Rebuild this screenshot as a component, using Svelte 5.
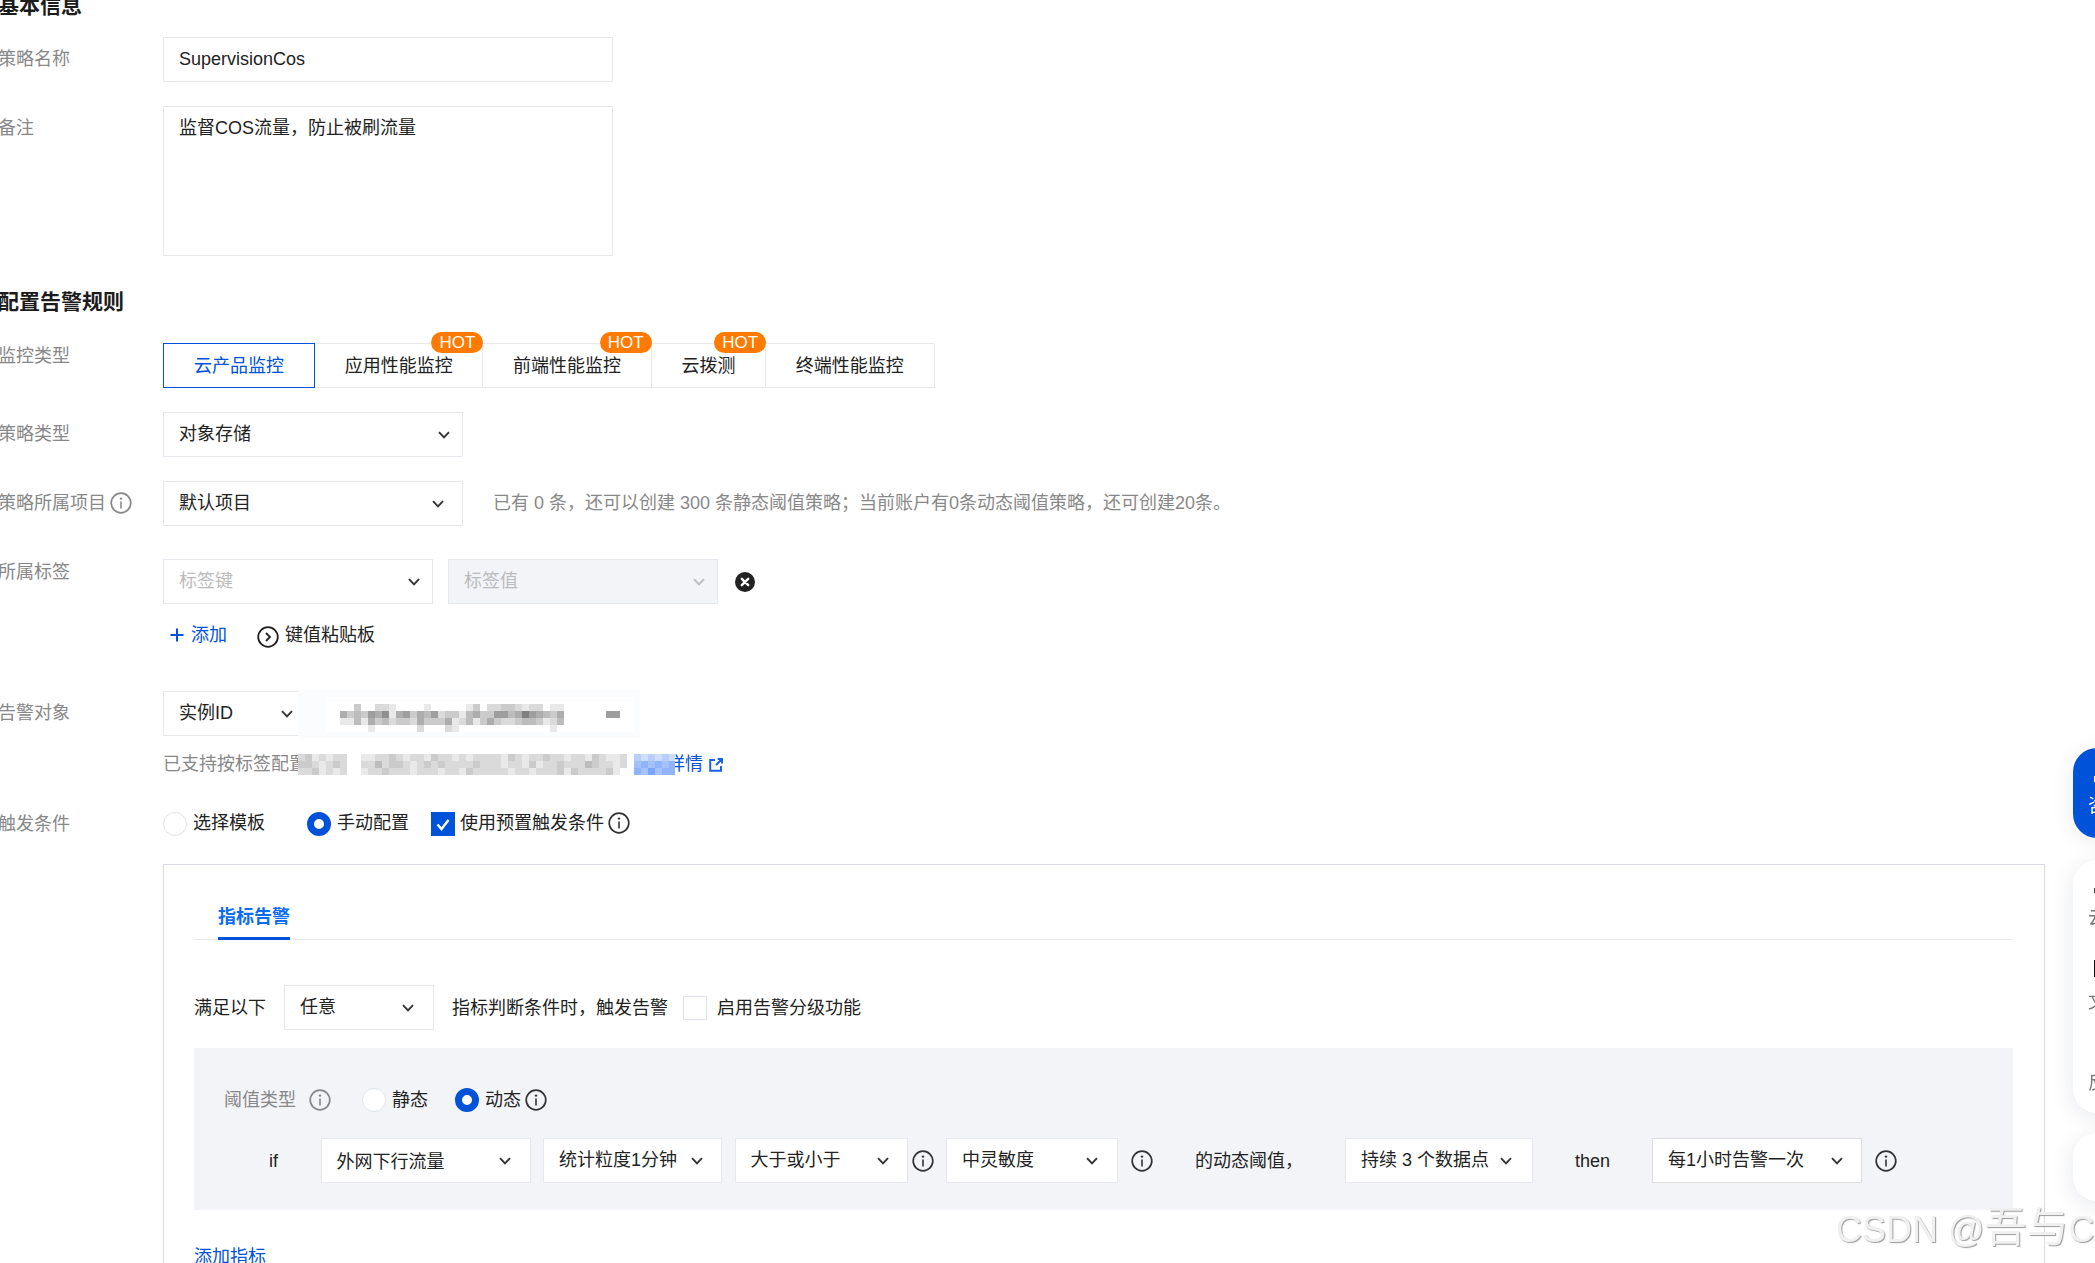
<script>
  const tabs = [
    { name: '云产品监控', active: true },
    { name: '应用性能监控', hot: true },
    { name: '前端性能监控', hot: true },
    { name: '云拨测', hot: true },
    { name: '终端性能监控' }
  ];

  // blurred-out values in the screenshot, one digit per 7px block (0 = nothing)
  const valueRows = [
    '00300221000010000013022332122011000000',
    '53436571563546233145336645865435000000660',
    '114153423325333512413532234431240000000',
    '000010000002000210000000000000100000000'
  ];
  const noteRows = [
    '23121220011223212213221212222132122322122132112',
    '33212320022423321232322223222122131223222432212',
    '22312120012232221222122132222212212223132222310'
  ];
  const linkRows = ['212121', '343434', '435344'];

  function cells(rows, color) {
    const out = [];
    rows.forEach((row, y) => {
      [...row].forEach((v, x) => {
        if (v !== '0') out.push({ x: x * 7, y: y * 7, fill: color(+v) });
      });
    });
    return out;
  }
  const gray = (v) => { const c = 248 - v * 15; return `rgb(${c},${c},${c})`; };
  const blue = (v) => `rgb(${225 - v * 20},${235 - v * 14},250)`;
</script>

{#snippet chevron()}
  <svg class="chevron" viewBox="0 0 12 8"><path d="M1 1.2 6 6.4l5-5.2" /></svg>
{/snippet}

{#snippet info(cls)}
  <svg class="info {cls}" viewBox="0 0 22 22">
    <circle class="ring" cx="11" cy="11" r="9.8" />
    <circle class="dot" cx="11" cy="6.6" r="1.2" />
    <path class="stem" d="M11 9.6v7" />
  </svg>
{/snippet}

<div class="page">
  <h2>基本信息</h2>
  <div class="row first">
    <div class="label">策略名称</div>
    <div class="input">SupervisionCos</div>
  </div>
  <div class="row">
    <div class="label">备注</div>
    <div class="input textarea">监督COS流量，防止被刷流量</div>
  </div>

  <h2 class="rules">配置告警规则</h2>
  <div class="row tabs-row">
    <div class="label up">监控类型</div>
    <div class="tabs">
      {#each tabs as tab}
        <div class="tab" class:active={tab.active}>
          {tab.name}
          {#if tab.hot}<span class="hot">HOT</span>{/if}
        </div>
      {/each}
    </div>
  </div>
  <div class="row">
    <div class="label">策略类型</div>
    <div class="select s-wide tight"><span>对象存储</span>{@render chevron()}</div>
  </div>
  <div class="row">
    <div class="label with-icon">策略所属项目{@render info('muted')}</div>
    <div class="select s-wide"><span>默认项目</span>{@render chevron()}</div>
    <div class="quota">已有 0 条，还可以创建 300 条静态阈值策略；当前账户有0条动态阈值策略，还可创建20条。</div>
  </div>
  <div class="row tag-row">
    <div class="label up">所属标签</div>
    <div class="select s-tag tight placeholder"><span>标签键</span>{@render chevron()}</div>
    <div class="select s-tag tight placeholder disabled"><span>标签值</span>{@render chevron()}</div>
    <svg class="clear" viewBox="0 0 20 20">
      <circle cx="10" cy="10" r="10" />
      <path d="M6.8 6.8l6.4 6.4M13.2 6.8l-6.4 6.4" />
    </svg>
  </div>
  <div class="actions">
    <span class="link add">
      <svg class="plus" viewBox="0 0 14 14"><path d="M7 0.5v13M0.5 7h13" /></svg>
      添加
    </span>
    <span class="paste">
      <svg class="paste-icon" viewBox="0 0 22 22">
        <circle cx="11" cy="11" r="9.8" />
        <path d="M9 7l4 4-4 4" />
      </svg>
      键值粘贴板
    </span>
  </div>
  <div class="row target-row">
    <div class="label">告警对象</div>
    <div class="select s-target"><span>实例ID</span>{@render chevron()}</div>
    <div class="blur-box">
      <div class="blur-inner">
        <svg class="blur-values" width="294" height="28">
          {#each cells(valueRows, gray) as c}
            <rect x={c.x} y={c.y} width="7" height="7" fill={c.fill} />
          {/each}
        </svg>
      </div>
    </div>
  </div>
  <div class="note">
    <span class="note-text">已支持按标签配置</span>
    <svg class="blur-note" width="377" height="21">
      {#each cells(noteRows, gray) as c}
        <rect x={c.x} y={c.y} width="7" height="7" fill={c.fill} />
      {/each}
      {#each cells(linkRows, blue) as c}
        <rect x={c.x + 336} y={c.y} width="7" height="7" fill={c.fill} />
      {/each}
    </svg>
    <span class="link note-link">详情</span>
    <svg class="external" viewBox="0 0 14 14">
      <path d="M6 2H1.2v10.8H12V8" />
      <path d="M7 7l6-6M8.6 1H13v4.4" />
    </svg>
  </div>
  <div class="row trigger-row">
    <div class="label">触发条件</div>
    <span class="radio"></span>
    <span class="opt">选择模板</span>
    <span class="radio checked gap-l"></span>
    <span class="opt">手动配置</span>
    <span class="check checked gap-m">
      <svg viewBox="0 0 24 24"><path d="M6.5 12.5l4 4.5 7-9" /></svg>
    </span>
    <span class="opt narrow">使用预置触发条件</span>
    {@render info('dark')}
  </div>

  <div class="box">
    <div class="box-tabs"><span class="box-tab">指标告警</span></div>

    <div class="match-row">
      <span>满足以下</span>
      <div class="select s-any"><span>任意</span>{@render chevron()}</div>
      <span>指标判断条件时，触发告警</span>
      <span class="check"></span>
      <span>启用告警分级功能</span>
    </div>

    <div class="panel">
      <div class="type-row">
        <span class="type-label">阈值类型</span>
        {@render info('muted')}
        <span class="radio filled static"></span>
        <span class="opt">静态</span>
        <span class="radio checked dynamic"></span>
        <span class="opt">动态</span>
        {@render info('dark')}
      </div>
      <div class="if-row">
        <span class="if">if</span>
        <div class="select s1 low"><span>外网下行流量</span>{@render chevron()}</div>
        <div class="select s2"><span>统计粒度1分钟</span>{@render chevron()}</div>
        <div class="select s3"><span>大于或小于</span>{@render chevron()}</div>
        <span class="pull">{@render info('dark')}</span>
        <div class="select s4"><span>中灵敏度</span>{@render chevron()}</div>
        {@render info('dark')}
        <span class="dyn">的动态阈值，</span>
        <div class="select s5"><span>持续 3 个数据点</span>{@render chevron()}</div>
        <span class="then">then</span>
        <div class="select s6"><span>每1小时告警一次</span>{@render chevron()}</div>
        {@render info('dark')}
      </div>
    </div>

    <div class="link add-metric">添加指标</div>
  </div>
</div>

<div class="side">
  <div class="side-consult"><i class="bar"></i><span>咨询</span></div>
  <div class="side-card">
    <i class="tick"></i>
    <span class="cloud">云</span>
    <i class="bar"></i>
    <span class="doc">文</span>
    <span class="feedback">反</span>
  </div>
  <div class="side-card small"></div>
</div>

<div class="watermark">CSDN @<span class="cjk">吾与</span>C</div>

<style>
  :global(html), :global(body) {
    margin: 0;
    height: 100%;
    overflow: hidden;
    background: #fff;
  }

  .page {
    margin: -9px 0 0 -2px;
    width: 2097px;
    font-family: "Liberation Sans", "Noto Sans CJK SC", sans-serif;
    font-size: 18px;
    line-height: 24px;
    color: #222;
  }

  h2 {
    margin: 0;
    font-size: 21px;
    line-height: 30px;
    font-weight: 700;
    color: #1c1c1c;
  }
  h2.rules { margin-top: 31px; }

  .row {
    display: flex;
    align-items: flex-start;
    margin-top: 24px;
    position: relative;
  }
  .row.first { margin-top: 16px; }
  .tabs-row { margin-top: 26px; }
  .tag-row { margin-top: 33px; }
  .target-row { margin-top: 42px; }

  .label {
    width: 165px;
    flex: none;
    padding-top: 10px;
    color: #888;
  }
  .label.up { padding-top: 1px; }
  .label.with-icon {
    display: flex;
    align-items: center;
    gap: 4px;
  }

  .input {
    box-sizing: border-box;
    width: 450px;
    height: 45px;
    padding: 9px 15px;
    border: 1px solid #e6e8ee;
  }
  .textarea { height: 150px; }

  .tabs { display: flex; }
  .tab {
    position: relative;
    box-sizing: border-box;
    height: 45px;
    padding: 10px 29.7px;
    border: 1px solid #e6e8ee;
    border-left: none;
    white-space: nowrap;
  }
  .tab.active {
    width: 152px;
    padding-left: 30px;
    border: 1px solid #0052d9;
    color: #0052d9;
  }
  .hot {
    position: absolute;
    top: -12px;
    right: -1px;
    width: 52px;
    height: 21px;
    border-radius: 11px;
    background: #ff7a00;
    color: #fff;
    font-size: 17px;
    line-height: 21px;
    text-align: center;
  }

  .select {
    box-sizing: border-box;
    height: 45px;
    padding: 0 18px 0 15px;
    display: flex;
    align-items: center;
    justify-content: space-between;
    flex: none;
    background: #fff;
    border: 1px solid #e6e8ee;
    white-space: nowrap;
  }
  .select > span { padding-bottom: 2px; }
  .select.tight { padding-right: 12px; }
  .s-wide { width: 300px; }
  .s-tag { width: 270px; }
  .s-tag + .s-tag { margin-left: 15px; }
  .s-target { width: 137px; padding-right: 6px; }
  .s-any { width: 150px; padding-right: 19px; }
  .s1 { width: 210px; padding-right: 19px; }
  .s2 { width: 179px; }
  .s3 { width: 173px; }
  .s4 { width: 172px; padding-right: 19px; }
  .s5 { width: 188px; padding-right: 20px; margin-left: 29.5px; }
  .s6 { width: 210px; margin-left: 29.5px; border-color: #dcdcdc; }
  .low > span { padding: 3px 0 0; }

  .placeholder { color: #bbb; }
  .disabled { background: #f2f4f8; }
  .disabled .chevron path { stroke: #bbb; }

  .chevron {
    width: 12px;
    height: 8px;
    flex: none;
  }
  .chevron path {
    fill: none;
    stroke: #333;
    stroke-width: 1.9;
  }

  .info {
    width: 22px;
    height: 22px;
    flex: none;
  }
  .ring { fill: none; stroke: #333; stroke-width: 1.7; }
  .dot { fill: #333; }
  .stem { stroke: #333; stroke-width: 1.6; }
  .info.muted .ring, .info.muted .stem { stroke: #888; }
  .info.muted .dot { fill: #888; }

  .quota {
    margin: 10px 0 0 30px;
    color: #888;
    white-space: nowrap;
  }

  .clear {
    width: 20px;
    height: 20px;
    margin: 13px 0 0 17px;
  }
  .clear circle { fill: #222; }
  .clear path { stroke: #fff; stroke-width: 2.4; stroke-linecap: round; }

  .actions {
    display: flex;
    align-items: center;
    height: 28px;
    margin: 17px 0 0 172px;
  }
  .link { color: #0052d9; }
  .add {
    display: flex;
    align-items: center;
    gap: 7px;
  }
  .plus { width: 14px; height: 14px; }
  .plus path { stroke: #0052d9; stroke-width: 2; }
  .paste {
    display: flex;
    align-items: center;
    gap: 6px;
    margin-left: 30px;
  }
  .paste-icon { width: 22px; height: 22px; margin-top: 3px; }
  .paste-icon circle, .paste-icon path {
    fill: none;
    stroke: #222;
    stroke-width: 1.8;
  }

  .blur-box {
    position: absolute;
    left: 300px;
    top: -1px;
    box-sizing: border-box;
    width: 342px;
    height: 48px;
    padding: 7px 6px 6px 28px;
    background: #fbfcfe;
  }
  .blur-inner {
    height: 35px;
    padding: 7px 0 0 14px;
    box-sizing: border-box;
    background: #fff;
  }
  .blur-values { display: block; }

  .note {
    display: flex;
    align-items: center;
    height: 24px;
    margin: 16px 0 0 165px;
    color: #888;
  }
  .note-text {
    width: 135px;
    overflow: hidden;
    white-space: nowrap;
  }
  .blur-note {
    position: relative;
    width: 377px;
    height: 21px;
    margin-right: -8px;
    background: #fff;
  }
  .note-link { margin-right: 6px; }
  .external { width: 14px; height: 14px; margin-top: 2px; }
  .external path { fill: none; stroke: #1664e6; stroke-width: 2; }

  .trigger-row {
    margin-top: 36px;
    height: 24px;
    align-items: center;
  }
  .trigger-row .label { padding-top: 0; margin-top: -1px; }
  .trigger-row .opt { margin-top: -3px; }
  .trigger-row .info { margin-top: -3px; }

  .radio {
    box-sizing: border-box;
    width: 24px;
    height: 24px;
    flex: none;
    border: 1px solid #dfe2e8;
    border-radius: 50%;
    background: #fff;
  }
  .radio.checked { border: 7px solid #0052d9; }
  .gap-l { margin-left: 42px; }
  .gap-m { margin-left: 22px; }

  .opt { margin-left: 6px; white-space: nowrap; }
  .trigger-row .opt.narrow { margin: -3px 4px 0 5px; }

  .check {
    box-sizing: border-box;
    width: 24px;
    height: 24px;
    flex: none;
    border: 1px solid #dfe2e8;
    background: #fff;
  }
  .check.checked {
    border: none;
    background: #0052d9;
  }
  .check svg { display: block; width: 24px; height: 24px; }
  .check path { fill: none; stroke: #fff; stroke-width: 2.4; }

  .box {
    box-sizing: border-box;
    width: 1882px;
    margin: 28px 0 0 165px;
    padding: 0 31px 40px 30px;
    border: 1px solid #d8dbe4;
  }
  .box-tabs {
    padding: 40px 0 0 24px;
    height: 75px;
    box-sizing: border-box;
    border-bottom: 1px solid #e6e8ee;
  }
  .box-tab {
    display: inline-block;
    padding-bottom: 8px;
    border-bottom: 3px solid #0052d9;
    color: #0a6cf0;
    font-weight: 700;
  }

  .match-row {
    display: flex;
    align-items: center;
    margin-top: 45px;
    white-space: nowrap;
  }
  .match-row .select { margin: 0 18px 0 18px; }
  .match-row .check { margin: 0 10px 0 15px; }

  .panel {
    margin-top: 18px;
    height: 162px;
    box-sizing: border-box;
    padding: 40px 30px 0;
    background: #f2f4f8;
  }
  .type-row {
    display: flex;
    align-items: center;
    height: 24px;
  }
  .type-label { color: #888; margin-right: 13px; }
  .radio.filled { border-color: #e4e7ec; }
  .static { margin-left: 31px; }
  .dynamic { margin-left: 27px; }
  .type-row .opt + .info { margin-left: 4px; }

  .if-row {
    display: flex;
    align-items: center;
    gap: 12.5px;
    margin-top: 26px;
    white-space: nowrap;
  }
  .if { margin: 0 29px 0 45px; width: 10px; }
  .pull { display: flex; margin-left: -8.5px; }
  .dyn { margin-left: 30px; }
  .then { margin-left: 29.5px; }

  .add-metric { margin-top: 35px; }

  .side {
    position: fixed;
    left: 2073px;
    top: 748px;
    width: 120px;
    display: flex;
    flex-direction: column;
    gap: 22px;
    font-family: "Liberation Sans", "Noto Sans CJK SC", sans-serif;
    font-size: 18px;
    line-height: 24px;
  }
  .side i { display: block; }
  .side-consult {
    height: 90px;
    box-sizing: border-box;
    padding: 28px 0 0 15px;
    border-radius: 24px;
    background: #0052d9;
    color: #fff;
    box-shadow: 0 4px 24px rgba(0, 30, 80, 0.08);
  }
  .side-consult .bar {
    width: 18px;
    height: 6px;
    margin: 0 0 12px 6px;
    background: #fff;
  }
  .side-card {
    height: 253px;
    box-sizing: border-box;
    padding: 28px 0 0 15px;
    border-radius: 24px;
    background: #fff;
    color: #777;
    box-shadow: 0 4px 24px rgba(0, 30, 80, 0.1);
    display: flex;
    flex-direction: column;
    align-items: flex-start;
  }
  .side-card .tick {
    width: 8px;
    height: 5px;
    margin-left: 6px;
    background: #444;
  }
  .side-card .cloud { margin-top: 13px; }
  .side-card .bar {
    width: 10px;
    height: 17px;
    margin: 30px 0 0 6px;
    background: #111;
  }
  .side-card .doc { margin-top: 13px; }
  .side-card .feedback { margin-top: 57px; }
  .side-card.small { height: 68px; margin-top: -2px; }

  .watermark {
    position: fixed;
    left: 1836px;
    top: 1204px;
    font-family: "Liberation Sans", "Noto Sans CJK SC", sans-serif;
    font-size: 36px;
    line-height: 48px;
    white-space: nowrap;
    color: #f0f0f0;
    text-shadow: 1px 1px 1px #999;
  }
  .cjk { font-size: 42px; }
</style>
